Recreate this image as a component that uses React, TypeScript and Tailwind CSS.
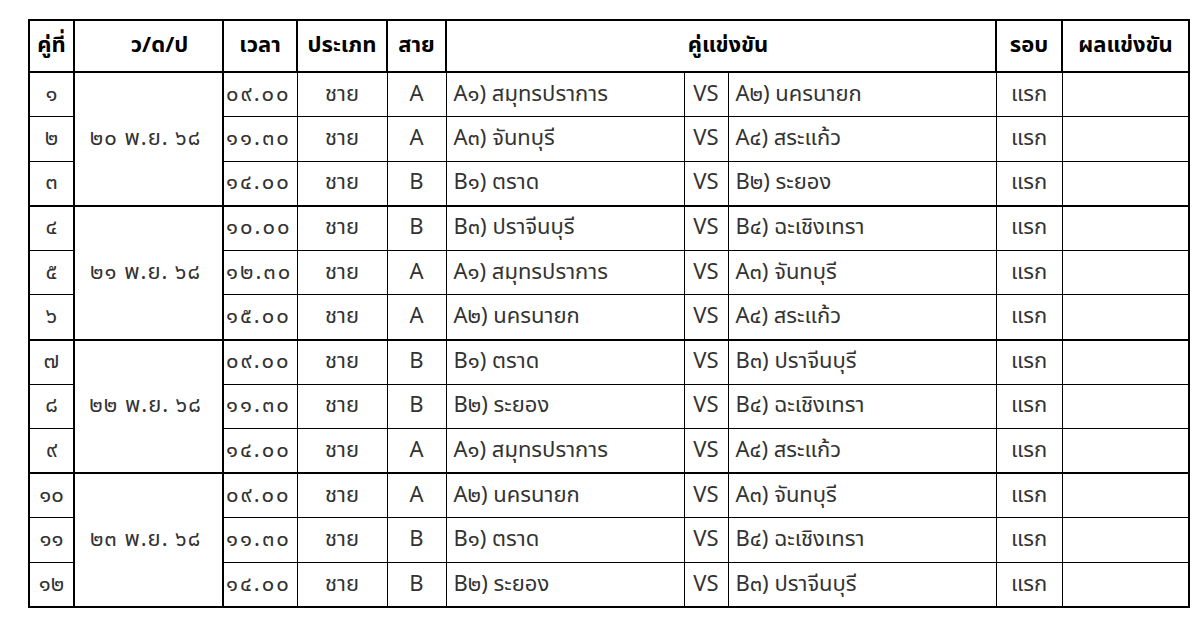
// ตารางการแข่งขัน - รอบแรก
const rows = [
  { no: "๑", date: "๒๐ พ.ย. ๖๘", time: "๐๙.๐๐", type: "ชาย", line: "A", home: "A๑) สมุทรปราการ", away: "A๒) นครนายก" },
  { no: "๒", time: "๑๑.๓๐", type: "ชาย", line: "A", home: "A๓) จันทบุรี", away: "A๔) สระแก้ว" },
  { no: "๓", time: "๑๔.๐๐", type: "ชาย", line: "B", home: "B๑) ตราด", away: "B๒) ระยอง" },
  { no: "๔", date: "๒๑ พ.ย. ๖๘", time: "๑๐.๐๐", type: "ชาย", line: "B", home: "B๓) ปราจีนบุรี", away: "B๔) ฉะเชิงเทรา" },
  { no: "๕", time: "๑๒.๓๐", type: "ชาย", line: "A", home: "A๑) สมุทรปราการ", away: "A๓) จันทบุรี" },
  { no: "๖", time: "๑๕.๐๐", type: "ชาย", line: "A", home: "A๒) นครนายก", away: "A๔) สระแก้ว" },
  { no: "๗", date: "๒๒ พ.ย. ๖๘", time: "๐๙.๐๐", type: "ชาย", line: "B", home: "B๑) ตราด", away: "B๓) ปราจีนบุรี" },
  { no: "๘", time: "๑๑.๓๐", type: "ชาย", line: "B", home: "B๒) ระยอง", away: "B๔) ฉะเชิงเทรา" },
  { no: "๙", time: "๑๔.๐๐", type: "ชาย", line: "A", home: "A๑) สมุทรปราการ", away: "A๔) สระแก้ว" },
  { no: "๑๐", date: "๒๓ พ.ย. ๖๘", time: "๐๙.๐๐", type: "ชาย", line: "A", home: "A๒) นครนายก", away: "A๓) จันทบุรี" },
  { no: "๑๑", time: "๑๑.๓๐", type: "ชาย", line: "B", home: "B๑) ตราด", away: "B๔) ฉะเชิงเทรา" },
  { no: "๑๒", time: "๑๔.๐๐", type: "ชาย", line: "B", home: "B๒) ระยอง", away: "B๓) ปราจีนบุรี" },
];

export default function App() {
  return (
    <div className="w-[1200px] h-[619px] bg-white pt-[19px] pl-[28px] font-['Tahoma','Noto_Sans_Thai','Noto_Sans',sans-serif] text-[#333333]">
      <table className="border-collapse table-fixed w-[1162px] border-2 border-black text-[22px] leading-none">
        <colgroup>
          <col className="w-[45px]" />
          <col className="w-[149px]" />
          <col className="w-[74px]" />
          <col className="w-[90px]" />
          <col className="w-[59px]" />
          <col className="w-[238px]" />
          <col className="w-[44px]" />
          <col className="w-[268px]" />
          <col className="w-[66px]" />
          <col className="w-[127px]" />
        </colgroup>
        <thead>
          <tr className="h-[52px] text-black text-[22px]">
            <th className="border-2 border-black font-bold">คู่ที่</th>
            <th className="border-2 border-black font-bold pl-[22px]">ว/ด/ป</th>
            <th className="border-2 border-black font-bold">เวลา</th>
            <th className="border-2 border-black font-bold">ประเภท</th>
            <th className="border-2 border-black font-bold">สาย</th>
            <th colSpan={3} className="border-2 border-black font-bold pl-[14px]">คู่แข่งขัน</th>
            <th className="border-2 border-black font-bold">รอบ</th>
            <th className="border-2 border-black font-bold">ผลแข่งขัน</th>
          </tr>
        </thead>
        <tbody>
          {rows.map((r, i) => {
            const groupEnd = i % 3 === 2;
            const rb = groupEnd ? "border-b-2" : "border-b";
            return (
              <tr key={r.no} className="h-[44.6px]">
                <td className={`border-x border-black ${rb} text-center`}>{r.no}</td>
                {r.date && (
                  <td rowSpan={3} className="border-2 border-black text-center tracking-[1px] pr-[6px]">
                    {r.date}
                  </td>
                )}
                <td className={`border-l-2 border-r border-black ${rb} pl-[2px] whitespace-nowrap tracking-[2px]`}>{r.time}</td>
                <td className={`border-x border-black ${rb} text-center`}>{r.type}</td>
                <td className={`border-x border-black ${rb} text-center`}>{r.line}</td>
                <td className={`border-x border-black ${rb} pl-[7px] whitespace-nowrap`}>{r.home}</td>
                <td className={`border-x border-black ${rb} text-center`}>VS</td>
                <td className={`border-x border-black ${rb} pl-[7px] whitespace-nowrap`}>{r.away}</td>
                <td className={`border-x border-black ${rb} text-center`}>แรก</td>
                <td className={`border-x border-black ${rb}`}></td>
              </tr>
            );
          })}
        </tbody>
      </table>
    </div>
  );
}
